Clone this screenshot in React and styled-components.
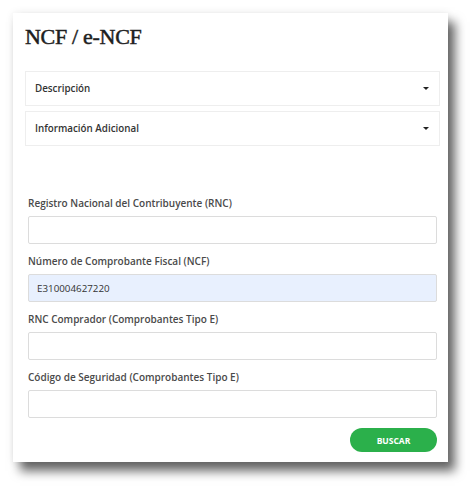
import React from 'react';
import styled, { createGlobalStyle } from 'styled-components';

const GlobalStyle = createGlobalStyle`
  body {
    margin: 0;
    background: #fff;
    font-family: "Open Sans", "Liberation Sans", sans-serif;
  }
`;

const Page = styled.div`
  padding: 13px 0 26px 13px;
`;

const Card = styled.div`
  width: 435px;
  height: 449px;
  box-sizing: border-box;
  padding: 11px 8px 0 12px;
  background: #fff;
  box-shadow: 0 0 8px rgba(0, 0, 0, 0.08), 7px 9px 10px rgba(0, 0, 0, 0.6);
`;

const Title = styled.h1`
  margin: 0;
  font-family: "Liberation Serif", "DejaVu Serif", serif;
  font-size: 22px;
  line-height: 26px;
  font-weight: 400;
  letter-spacing: -0.3px;
  color: #1f1f1f;
  -webkit-text-stroke: 0.5px #1f1f1f;
`;

const Accordions = styled.div`
  margin-top: 21px;
  display: flex;
  flex-direction: column;
  gap: 5px;
`;

const AccordionHead = styled.div`
  height: 35px;
  box-sizing: border-box;
  border: 1px solid #eeeeee;
  display: flex;
  align-items: center;
  justify-content: space-between;
  padding: 0 9px 0 9px;
  font-size: 9.8px;
  font-weight: 600;
  color: #333;
`;

const Caret = styled.span`
  width: 0;
  height: 0;
  border-left: 3px solid transparent;
  border-right: 3px solid transparent;
  border-top: 3px solid #222;
  margin-right: 1px;
`;

const Form = styled.div`
  margin-top: 49px;
  padding: 0 3px;
  display: flex;
  flex-direction: column;
  gap: 9px;
`;

const Group = styled.div`
  display: flex;
  flex-direction: column;
`;

const Label = styled.label`
  font-size: 10px;
  line-height: 16px;
  font-weight: 600;
  color: #4a4a4a;
  margin-bottom: 5px;
`;

const Input = styled.div`
  height: 28px;
  box-sizing: border-box;
  border: 1px solid #dcdcdc;
  border-radius: 2px;
  background: ${(props) => (props.filled ? '#e8f0fe' : '#fff')};
  display: flex;
  align-items: center;
  padding: 0 8px;
  font-size: 9.8px;
  color: #333;
`;

const Actions = styled.div`
  display: flex;
  justify-content: flex-end;
  margin-top: 10px;
  padding: 0 3px;
`;

const Button = styled.button`
  width: 87px;
  height: 24px;
  border: none;
  border-radius: 12px;
  background: #2bb04b;
  color: #fff;
  font-family: "Open Sans", "Liberation Sans", sans-serif;
  font-size: 8.5px;
  font-weight: 700;
  padding: 0;
`;

const fields = [
  { label: 'Registro Nacional del Contribuyente (RNC)', value: '' },
  { label: 'Número de Comprobante Fiscal (NCF)', value: 'E310004627220' },
  { label: 'RNC Comprador (Comprobantes Tipo E)', value: '' },
  { label: 'Código de Seguridad (Comprobantes Tipo E)', value: '' },
];

export default function App() {
  return (
    <Page>
      <GlobalStyle />
      <Card>
        <Title>NCF / e-NCF</Title>
        <Accordions>
          <AccordionHead>
            Descripción
            <Caret />
          </AccordionHead>
          <AccordionHead>
            Información Adicional
            <Caret />
          </AccordionHead>
        </Accordions>
        <Form>
          {fields.map((f) => (
            <Group key={f.label}>
              <Label>{f.label}</Label>
              <Input filled={!!f.value}>{f.value}</Input>
            </Group>
          ))}
        </Form>
        <Actions>
          <Button>BUSCAR</Button>
        </Actions>
      </Card>
    </Page>
  );
}
